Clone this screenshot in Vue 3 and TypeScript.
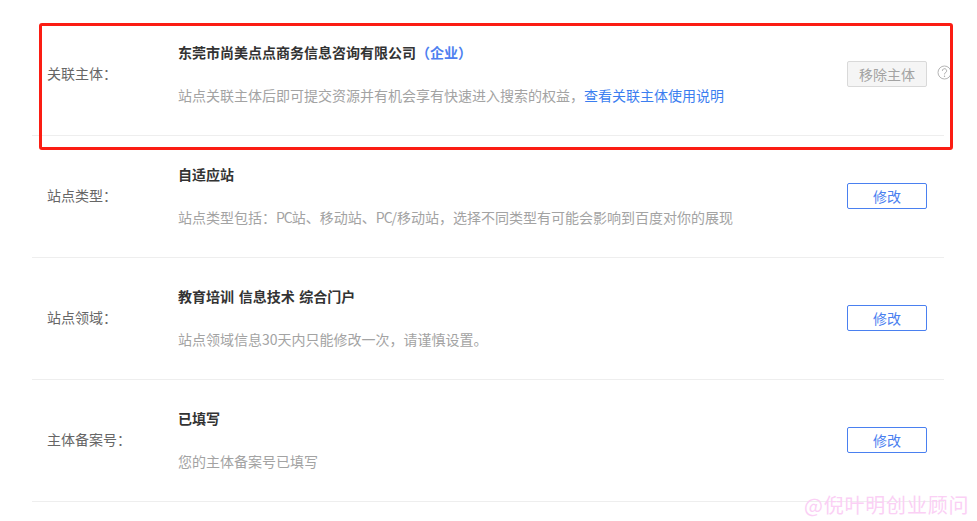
<script setup lang="ts">
interface Row {
  label: string
  title: string
  tag?: string
  desc: string[]
  link?: string
  action: string
  disabled?: boolean
}
const rows: Row[] = [
  { label: '关联主体\uFF1A', title: '东莞市尚美点点商务信息咨询有限公司', tag: '\uFF08企业\uFF09', desc: ['站点关联主体后即可提交资源并有机会享有快速进入搜索的权益\uFF0C'], link: '查看关联主体使用说明', action: '移除主体', disabled: true },
  { label: '站点类型\uFF1A', title: '自适应站', desc: ['站点类型包括\uFF1A', 'PC', '站、移动站、', 'PC', '/移动站\uFF0C选择不同类型有可能会影响到百度对你的展现'], action: '修改' },
  { label: '站点领域\uFF1A', title: '教育培训 信息技术 综合门户', desc: ['站点领域信息30天内只能修改一次\uFF0C请谨慎设置。'], action: '修改' },
  { label: '主体备案号\uFF1A', title: '已填写', desc: ['您的主体备案号已填写'], action: '修改' },
]
</script>

<template>
  <div class="page">
    <div v-for="row in rows" :key="row.label" class="row">
      <div class="label">{{ row.label }}</div>
      <div class="main">
        <div class="title">{{ row.title }}<span v-if="row.tag" class="tag">{{ row.tag }}</span></div>
        <div class="desc"><span v-for="(part, i) in row.desc" :key="i" :class="{ tight: i % 2 === 1 }">{{ part }}</span><a v-if="row.link" class="link">{{ row.link }}</a></div>
      </div>
      <div class="action" :class="{ off: row.disabled }">{{ row.action }}</div>
      <svg v-if="row.disabled" class="help" width="15" height="15" viewBox="0 0 15 15">
        <circle cx="7.5" cy="7.5" r="6.5" fill="none" stroke="#b5b5b5" />
        <path d="M5.4 5.8a2.1 2.1 0 1 1 3.3 1.7c-.8.5-1.2 1-1.2 1.9" fill="none" stroke="#a8a8a8" />
        <circle cx="7.5" cy="11.2" r=".7" fill="#a8a8a8" />
      </svg>
    </div>
    <div class="highlight"></div>
    <div class="mark">@倪叶明创业顾问</div>
  </div>
</template>

<style scoped>
.page {
  position: relative;
  width: 977px;
  height: 521px;
  padding: 14px 33px 0 32px;
  box-sizing: border-box;
  overflow: hidden;
  background: #fff;
  font-family: "Noto Sans CJK SC", "Liberation Sans", sans-serif;
  font-size: 14px;
  color: #666;
}
.row {
  position: relative;
  display: flex;
  align-items: center;
  height: 122px;
  padding-bottom: 2px;
  box-sizing: border-box;
  border-bottom: 1px solid #eee;
}
.label {
  width: 146px;
  padding-left: 15px;
  padding-bottom: 1px;
  box-sizing: border-box;
  flex: none;
  color: #666;
}
.main {
  flex: 1;
  display: flex;
  flex-direction: column;
  gap: 23px;
  padding-bottom: 1px;
}
.title {
  font-weight: 700;
  color: #333;
  line-height: 20px;
  word-spacing: 1.5px;
}
.tag {
  color: #4e7ff0;
}
.desc {
  color: #a3a3a3;
  line-height: 20px;
}
.tight {
  letter-spacing: -1px;
}
.link {
  color: #3b7ef0;
}
.action {
  flex: none;
  width: 80px;
  height: 26px;
  margin-right: 17px;
  box-sizing: border-box;
  border: 1px solid #4a80f0;
  border-radius: 2px;
  color: #4a80f0;
  text-align: center;
  line-height: 25px;
}
.action.off {
  background: #f5f5f5;
  border-color: #d9d9d9;
  color: #a3a3a3;
}
.help {
  position: absolute;
  right: -8px;
  top: 51px;
}
.highlight {
  position: absolute;
  left: 39px;
  top: 23px;
  width: 914px;
  height: 127px;
  box-sizing: border-box;
  border: 3px solid #fb1d13;
  border-radius: 3px;
  pointer-events: none;
}
.mark {
  position: absolute;
  left: 804px;
  top: 491px;
  font-size: 20px;
  letter-spacing: 0.8px;
  line-height: 28px;
  white-space: nowrap;
  color: #fbd0f5;
}
</style>
